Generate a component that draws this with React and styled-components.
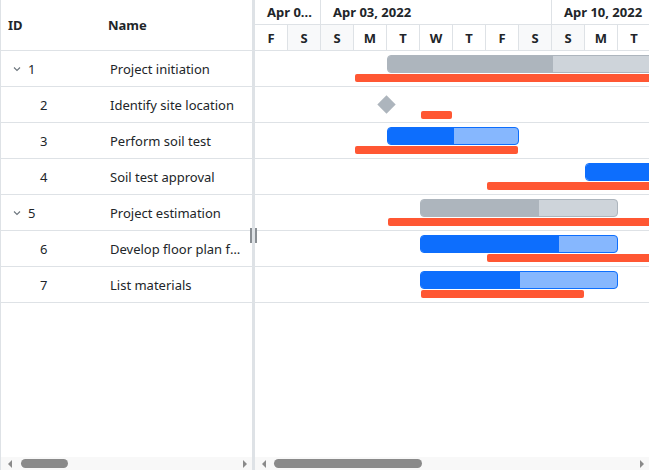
import React from "react";
import styled, { createGlobalStyle } from "styled-components";

const DAY = 33;
const ROW = 36;

const days = ["F", "S", "S", "M", "T", "W", "T", "F", "S", "S", "M", "T", "W"];
const weekend = [false, true, true, false, false, false, false, false, true, true, false, false, false];

const weeks = [
  { label: "Apr 0...", span: 2 },
  { label: "Apr 03, 2022", span: 7 },
  { label: "Apr 10, 2022", span: 4 },
];

const tasks = [
  { id: 1, name: "Project initiation", parent: true, kind: "parent", start: 132, width: 330, progress: 165, base: [100, 400] },
  { id: 2, name: "Identify site location", milestone: 131, base: [166, 31] },
  { id: 3, name: "Perform soil test", kind: "task", start: 132, width: 132, progress: 66, base: [100, 163] },
  { id: 4, name: "Soil test approval", kind: "task", start: 330, width: 200, progress: 200, base: [232, 300] },
  { id: 5, name: "Project estimation", parent: true, kind: "parent", start: 165, width: 198, progress: 118, base: [133, 400] },
  { id: 6, name: "Develop floor plan for estimation", kind: "task", start: 165, width: 198, progress: 138, base: [232, 300] },
  { id: 7, name: "List materials", kind: "task", start: 165, width: 198, progress: 99, base: [166, 163] },
];

const GlobalStyle = createGlobalStyle`
  html, body { margin: 0; padding: 0; }
  body {
    font-family: "Noto Sans", "Open Sans", sans-serif;
    color: #212529;
    background: #fff;
  }
`;

const Shell = styled.div`
  display: flex;
  width: 649px;
  height: 470px;
  overflow: hidden;
  position: relative;
`;

const Pane = styled.div`
  display: flex;
  flex-direction: column;
  box-sizing: border-box;
  width: ${(p) => p.$width || "auto"};
  flex: ${(p) => (p.$width ? "none" : "1")};
  min-width: 0;
  overflow: hidden;
  border-left: ${(p) => (p.$bordered ? "1px solid #dee2e6" : "none")};
`;

const Splitter = styled.div`
  width: 3px;
  flex: none;
  background: #dee2e6;
`;

const Grip = styled.div`
  position: absolute;
  left: 250px;
  top: 228px;
  width: 7px;
  height: 15px;
  display: flex;
  justify-content: space-between;
  & > span {
    width: 2px;
    background: #8a8f94;
  }
`;

const GridHeader = styled.div`
  display: grid;
  grid-template-columns: 100px 1fr;
  height: 51px;
  flex: none;
  border-bottom: 1px solid #dee2e6;
  font-weight: 700;
  font-size: 13px;
  align-items: center;
  box-sizing: border-box;
`;

const HeadCell = styled.div`
  padding-left: ${(p) => p.$pad}px;
`;

const GridRow = styled.div`
  display: grid;
  grid-template-columns: 100px 1fr;
  height: ${ROW}px;
  flex: none;
  border-bottom: 1px solid #dee2e6;
  box-sizing: border-box;
  align-items: center;
  font-size: 13px;
`;

const IdCell = styled.div`
  display: flex;
  align-items: center;
  padding-left: ${(p) => (p.$parent ? 12 : 39)}px;
  gap: 7px;
`;

const NameCell = styled.div`
  padding-left: 9px;
  padding-right: 8px;
  white-space: nowrap;
  overflow: hidden;
  text-overflow: ellipsis;
`;

const Fill = styled.div`
  flex: 1;
`;

const ScrollBar = styled.div`
  height: 13px;
  flex: none;
  background: #f8f8f8;
  display: flex;
  align-items: center;
  padding: 0 5px 0 7px;
  gap: 4px;
`;

const Arrow = styled.div`
  width: 0;
  height: 0;
  border-top: 4px solid transparent;
  border-bottom: 4px solid transparent;
  ${(p) => (p.$dir === "left" ? "border-right: 4px solid #8a8a8a;" : "border-left: 4px solid #8a8a8a;")}
  margin-left: ${(p) => (p.$dir === "right" ? "auto" : "0")};
`;

const Thumb = styled.div`
  width: ${(p) => p.$w}px;
  height: 9px;
  border-radius: 5px;
  background: #8a8a8a;
  margin-left: ${(p) => p.$off}px;
`;

const TimeHeader = styled.div`
  height: 51px;
  flex: none;
  border-bottom: 1px solid #dee2e6;
  box-sizing: border-box;
  display: grid;
  grid-template-rows: 25px 25px;
  font-weight: 700;
  font-size: 13px;
`;

const Track = styled.div`
  display: flex;
  min-width: 0;
`;

const WeekCell = styled.div`
  flex: none;
  width: ${(p) => p.$span * DAY}px;
  box-sizing: border-box;
  border-right: 1px solid #dee2e6;
  border-bottom: 1px solid #dee2e6;
  padding-left: 12px;
  display: flex;
  align-items: center;
  white-space: nowrap;
  overflow: hidden;
`;

const DayCell = styled.div`
  flex: none;
  width: ${DAY}px;
  box-sizing: border-box;
  border-right: 1px solid #dee2e6;
  background: ${(p) => (p.$weekend ? "#f8f9fa" : "#fff")};
  display: flex;
  align-items: center;
  justify-content: center;
`;

const ChartRow = styled.div`
  position: relative;
  height: ${ROW}px;
  flex: none;
  border-bottom: 1px solid #dee2e6;
  box-sizing: border-box;
`;

const Bar = styled.div`
  position: absolute;
  top: 4px;
  height: 18px;
  box-sizing: border-box;
  border-radius: 4px;
  overflow: hidden;
  border: 1px solid ${(p) => (p.$kind === "parent" ? "#adb5bd" : "#0d6efd")};
  background: ${(p) => (p.$kind === "parent" ? "#ced4da" : "#86b7fe")};
`;

const Progress = styled.div`
  height: 100%;
  background: ${(p) => (p.$kind === "parent" ? "#adb5bd" : "#0d6efd")};
`;

const Baseline = styled.div`
  position: absolute;
  top: 23px;
  height: 8px;
  border-radius: 2px;
  background: #ff5733;
`;

const Milestone = styled.div`
  position: absolute;
  top: 11px;
  width: 13px;
  height: 13px;
  background: #adb5bd;
  transform: rotate(45deg);
`;

const Chevron = () => (
  <svg width="8" height="6" viewBox="0 0 8 6">
    <path d="M1 1.5 L4 4.5 L7 1.5" fill="none" stroke="#6c757d" strokeWidth="1.1" />
  </svg>
);

const App = () => {
  return (
    <>
      <GlobalStyle />
      <Shell>
        <Pane $width="252px" $bordered>
          <GridHeader>
            <HeadCell $pad={7}>ID</HeadCell>
            <HeadCell $pad={7}>Name</HeadCell>
          </GridHeader>
          {tasks.map((t) => (
            <GridRow key={t.id}>
              <IdCell $parent={t.parent}>
                {t.parent && <Chevron />}
                {t.id}
              </IdCell>
              <NameCell>{t.name}</NameCell>
            </GridRow>
          ))}
          <Fill />
          <ScrollBar>
            <Arrow $dir="left" />
            <Thumb $w={47} $off={5} />
            <Arrow $dir="right" />
          </ScrollBar>
        </Pane>
        <Splitter />
        <Pane>
          <TimeHeader>
            <Track>
              {weeks.map((w) => (
                <WeekCell key={w.label} $span={w.span}>
                  {w.label}
                </WeekCell>
              ))}
            </Track>
            <Track>
              {days.map((d, i) => (
                <DayCell key={i} $weekend={weekend[i]}>
                  {d}
                </DayCell>
              ))}
            </Track>
          </TimeHeader>
          {tasks.map((t) => (
            <ChartRow key={t.id}>
              {t.milestone !== undefined ? (
                <Milestone style={{ left: t.milestone - 6 }} />
              ) : (
                <Bar $kind={t.kind} style={{ left: t.start, width: t.width }}>
                  <Progress $kind={t.kind} style={{ width: t.progress }} />
                </Bar>
              )}
              <Baseline
                style={{ left: t.base[0], width: t.base[1], top: t.milestone !== undefined ? 24 : 23 }}
              />
            </ChartRow>
          ))}
          <Fill />
          <ScrollBar>
            <Arrow $dir="left" />
            <Thumb $w={148} $off={4} />
            <Arrow $dir="right" />
          </ScrollBar>
        </Pane>
        <Grip>
          <span />
          <span />
        </Grip>
      </Shell>
    </>
  );
};

export default App;
